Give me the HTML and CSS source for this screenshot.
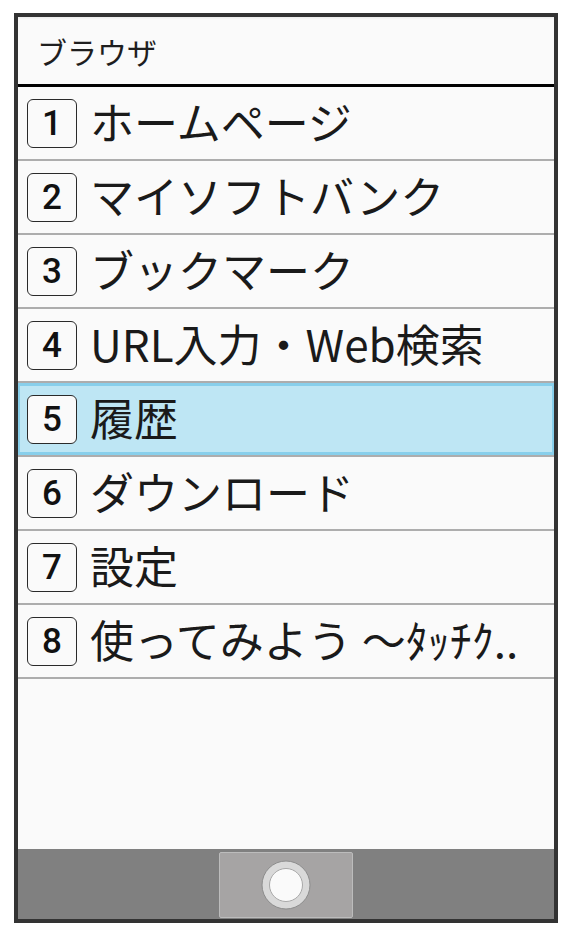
FILE: index.html
```html
<!DOCTYPE html>
<html lang="ja">
<head>
    <meta charset="UTF-8">
    <meta name="viewport" content="width=device-width, initial-scale=1.0">
    <title>ブラウザ</title>
    <link rel="stylesheet" href="styles.css">
</head>
<body>
    <div class="phone">
        <div class="title-bar">ブラウザ</div>

        <ul class="menu-list">
            <li class="menu-item"><span class="num-key">1</span><span class="menu-label">ホームページ</span></li>
            <li class="menu-item"><span class="num-key">2</span><span class="menu-label">マイソフトバンク</span></li>
            <li class="menu-item"><span class="num-key">3</span><span class="menu-label">ブックマーク</span></li>
            <li class="menu-item"><span class="num-key">4</span><span class="menu-label">URL入力・Web検索</span></li>
            <li class="menu-item selected"><span class="num-key">5</span><span class="menu-label">履歴</span></li>
            <li class="menu-item"><span class="num-key">6</span><span class="menu-label">ダウンロード</span></li>
            <li class="menu-item"><span class="num-key">7</span><span class="menu-label">設定</span></li>
            <li class="menu-item"><span class="num-key">8</span><span class="menu-label">使ってみよう ～ﾀｯﾁｸ..</span></li>
        </ul>

        <div class="nav-bar">
            <div class="home-key">
                <svg width="52" height="52" viewBox="0 0 52 52">
                    <circle cx="26" cy="26" r="24" fill="#d9d9d9" stroke="#8c8c8c" stroke-width="1"/>
                    <circle cx="26" cy="26" r="16.5" fill="#fafafa" stroke="#a8a8a8" stroke-width="1"/>
                </svg>
            </div>
        </div>
    </div>
</body>
</html>
```

FILE: styles.css
```css
body {
    margin: 0;
    background-color: #ffffff;
    font-family: "Noto Sans CJK JP", "Noto Sans", sans-serif;
}
.phone {
    box-sizing: border-box;
    width: 544px;
    height: 910px;
    margin: 13px 0 0 14px;
    border: 4px solid #333333;
    background-color: #fafafa;
    display: flex;
    flex-direction: column;
}
.title-bar {
    height: 67px;
    border-bottom: 3px solid #000000;
    padding-left: 19px;
    display: flex;
    align-items: center;
    font-size: 30px;
    color: #1e1e1e;
    box-shadow: inset 0 3px 3px -2px rgba(0, 0, 0, 0.08);
}
.menu-list {
    list-style: none;
    margin: 0;
    padding: 0;
    flex-grow: 1;
}
.menu-item {
    height: 72px;
    border-bottom: 2px solid #adadad;
    padding-left: 9px;
    display: flex;
    align-items: center;
    gap: 13px;
    overflow: hidden;
}
.menu-item.selected {
    background-color: #bee6f4;
    box-shadow: inset 2px 3px 0 #88cfeb, inset -2px -3px 0 #88cfeb;
}
.num-key {
    box-sizing: border-box;
    width: 50px;
    height: 49px;
    flex-shrink: 0;
    border: 1px solid #2a2a2a;
    border-radius: 6px;
    background-color: #fafafa;
    display: flex;
    align-items: center;
    justify-content: center;
    font-family: Roboto, "Noto Sans", sans-serif;
    font-weight: 500;
    font-size: 35px;
    color: #111111;
}
.menu-label {
    margin-bottom: 4px;
    font-size: 44px;
    color: #1a1a1a;
    white-space: nowrap;
}
.nav-bar {
    height: 70px;
    background-color: #808080;
    display: flex;
    justify-content: center;
    align-items: flex-start;
}
.home-key {
    box-sizing: border-box;
    width: 134px;
    height: 66px;
    margin-top: 3px;
    background-color: #a6a4a4;
    border: 1px solid #bcbcbc;
    border-radius: 2px;
    display: flex;
    align-items: center;
    justify-content: center;
}
```
